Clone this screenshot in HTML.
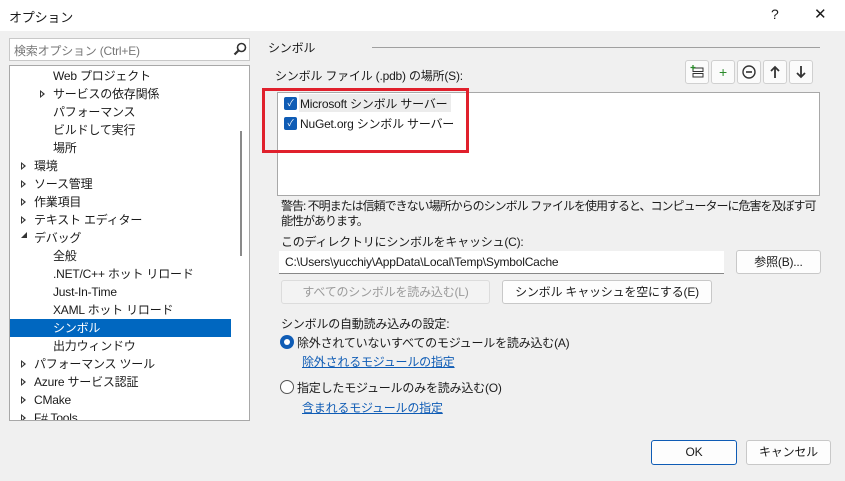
<!DOCTYPE html>
<html><head><meta charset="utf-8"><style>
*{box-sizing:border-box;margin:0;padding:0}
body{width:845px;height:481px;overflow:hidden;background:#f0f0f0;font-family:"Liberation Sans","Noto Sans CJK JP",sans-serif;font-size:12px;color:#1a1a1a;position:relative;letter-spacing:-0.2px}
.a{position:absolute;white-space:nowrap}
.title{left:0;top:0;width:845px;height:31px;background:#fff}
.box{position:absolute;background:#fff;border:1px solid #a8a8a8}
.row{position:absolute;height:18px;line-height:18px;white-space:nowrap}
.tri{position:absolute;width:0;height:0;border-top:4px solid transparent;border-bottom:4px solid transparent;border-left:5px solid #333}
.tri::after{content:"";position:absolute;left:-4px;top:-2px;border-top:2px solid transparent;border-bottom:2px solid transparent;border-left:2px solid #fff}
.btn{position:absolute;background:#fdfdfd;border:1px solid #c8c8c8;border-radius:3px;text-align:center}
.tb{position:absolute;top:60px;width:24px;height:24px;background:#fbfbfb;border:1px solid #d0d0d0;border-radius:3px;text-align:center;line-height:22px;font-size:14px}
.cb{position:absolute;width:13px;height:13px;background:#0f5cb5;border-radius:2px;color:#fff;font-size:9px;line-height:13px;text-align:center}
.link{color:#0f5cb5;text-decoration:underline}
</style></head><body>
<div class="a title"></div>
<div class="a" style="left:9px;top:7px;font-size:13px">オプション</div>
<div class="a" style="left:771px;top:6px;font-size:14px">?</div>
<div class="a" style="left:814px;top:5px;font-size:15px">✕</div>

<div class="box" style="left:9px;top:38px;width:241px;height:23px;border-color:#c8c8c8"></div>
<div class="a" style="left:14px;top:42px;color:#777">検索オプション (Ctrl+E)</div>
<svg class="a" style="left:233px;top:42px" width="14" height="14"><circle cx="8.5" cy="5.5" r="4" fill="none" stroke="#333" stroke-width="1.6"/><line x1="5.5" y1="8.5" x2="1.5" y2="12.5" stroke="#333" stroke-width="2.2"/></svg>

<div class="box" style="left:9px;top:65px;width:241px;height:356px;overflow:hidden">
<div class="a" style="left:230px;top:65px;width:2px;height:125px;background:#8a8a8a"></div>
<div class="row" style="left:43px;top:1px">Web プロジェクト</div>
<div class="tri" style="left:30px;top:24px"></div><div class="row" style="left:43px;top:19px">サービスの依存関係</div>
<div class="row" style="left:43px;top:37px">パフォーマンス</div>
<div class="row" style="left:43px;top:55px">ビルドして実行</div>
<div class="row" style="left:43px;top:73px">場所</div>
<div class="tri" style="left:11px;top:96px"></div><div class="row" style="left:24px;top:91px">環境</div>
<div class="tri" style="left:11px;top:114px"></div><div class="row" style="left:24px;top:109px">ソース管理</div>
<div class="tri" style="left:11px;top:132px"></div><div class="row" style="left:24px;top:127px">作業項目</div>
<div class="tri" style="left:11px;top:150px"></div><div class="row" style="left:24px;top:145px">テキスト エディター</div>
<div class="a" style="left:11px;top:166px;width:0;height:0;border-left:6px solid transparent;border-bottom:6px solid #333"></div><div class="row" style="left:24px;top:163px">デバッグ</div>
<div class="row" style="left:43px;top:181px">全般</div>
<div class="row" style="left:43px;top:199px">.NET/C++ ホット リロード</div>
<div class="row" style="left:43px;top:217px">Just-In-Time</div>
<div class="row" style="left:43px;top:235px">XAML ホット リロード</div>
<div class="a" style="left:0;top:253px;width:221px;height:18px;background:#0067c0"></div>
<div class="row" style="left:43px;top:253px;color:#fff">シンボル</div>
<div class="row" style="left:43px;top:271px">出力ウィンドウ</div>
<div class="tri" style="left:11px;top:294px"></div><div class="row" style="left:24px;top:289px">パフォーマンス ツール</div>
<div class="tri" style="left:11px;top:312px"></div><div class="row" style="left:24px;top:307px">Azure サービス認証</div>
<div class="tri" style="left:11px;top:330px"></div><div class="row" style="left:24px;top:325px">CMake</div>
<div class="tri" style="left:11px;top:348px"></div><div class="row" style="left:24px;top:343px">F# Tools</div>
</div>

<div class="a" style="left:268px;top:39px">シンボル</div>
<div class="a" style="left:372px;top:47px;width:448px;height:1px;background:#a0a0a0"></div>
<div class="a" style="left:275px;top:67px">シンボル ファイル (.pdb) の場所(S):</div>
<div class="tb" style="left:685px"><svg width="16" height="16" style="margin-top:3px"><rect x="4" y="4" width="10" height="3.5" fill="none" stroke="#333"/><rect x="4" y="9.5" width="10" height="3.5" fill="none" stroke="#333"/><path d="M4 1v5M1.5 3.5h5" stroke="#2a8a2a" stroke-width="1.3"/></svg></div>
<div class="tb" style="left:711px;color:#2a8a2a">+</div>
<div class="tb" style="left:737px"><svg width="14" height="14" style="margin-top:4px"><circle cx="7" cy="7" r="6" fill="none" stroke="#333" stroke-width="1.4"/><line x1="4" y1="7" x2="10" y2="7" stroke="#333" stroke-width="1.6"/></svg></div>
<div class="tb" style="left:763px"><svg width="12" height="14" style="margin-top:4px"><path d="M6 13V2M2 6l4-4 4 4" fill="none" stroke="#333" stroke-width="1.8"/></svg></div>
<div class="tb" style="left:789px"><svg width="12" height="14" style="margin-top:4px"><path d="M6 1v11M2 8l4 4 4-4" fill="none" stroke="#333" stroke-width="1.8"/></svg></div>

<div class="box" style="left:277px;top:92px;width:543px;height:104px"></div>
<div class="a" style="left:299px;top:94px;width:152px;height:18px;background:#ececec"></div>
<div class="cb" style="left:284px;top:97px">✓</div><div class="a" style="left:300px;top:95px">Microsoft シンボル サーバー</div>
<div class="cb" style="left:284px;top:117px">✓</div><div class="a" style="left:300px;top:115px">NuGet.org シンボル サーバー</div>
<div class="a" style="left:262px;top:88px;width:207px;height:65px;border:3.5px solid #e0202c"></div>

<div class="a" style="left:281px;top:199px;line-height:15px;letter-spacing:-1px">警告: 不明または信頼できない場所からのシンボル ファイルを使用すると、コンピューターに危害を及ぼす可<br>能性があります。</div>
<div class="a" style="left:281px;top:233px">このディレクトリにシンボルをキャッシュ(C):</div>
<div class="box" style="left:279px;top:251px;width:445px;height:23px;border:none;border-bottom:1px solid #888"></div>
<div class="a" style="left:285px;top:255px">C:\Users\yucchiy\AppData\Local\Temp\SymbolCache</div>
<div class="btn" style="left:736px;top:250px;width:85px;height:24px;line-height:22px">参照(B)...</div>
<div class="btn" style="left:281px;top:280px;width:209px;height:24px;line-height:22px;background:#f3f3f3;border-color:#dcdcdc;color:#9a9a9a">すべてのシンボルを読み込む(L)</div>
<div class="btn" style="left:502px;top:280px;width:210px;height:24px;line-height:22px">シンボル キャッシュを空にする(E)</div>
<div class="a" style="left:281px;top:315px">シンボルの自動読み込みの設定:</div>
<div class="a" style="left:280px;top:335px;width:14px;height:14px;border-radius:50%;background:#0f5cb5"><div style="margin:4px;width:6px;height:6px;border-radius:50%;background:#fff"></div></div>
<div class="a" style="left:297px;top:334px">除外されていないすべてのモジュールを読み込む(A)</div>
<div class="a link" style="left:302px;top:353px">除外されるモジュールの指定</div>
<div class="a" style="left:280px;top:380px;width:14px;height:14px;border-radius:50%;border:1px solid #555;background:#fff"></div>
<div class="a" style="left:297px;top:379px">指定したモジュールのみを読み込む(O)</div>
<div class="a link" style="left:302px;top:399px">含まれるモジュールの指定</div>

<div class="btn" style="left:651px;top:440px;width:86px;height:25px;line-height:23px;border:1px solid #0f5cb5">OK</div>
<div class="btn" style="left:746px;top:440px;width:85px;height:25px;line-height:23px">キャンセル</div>
</body></html>
